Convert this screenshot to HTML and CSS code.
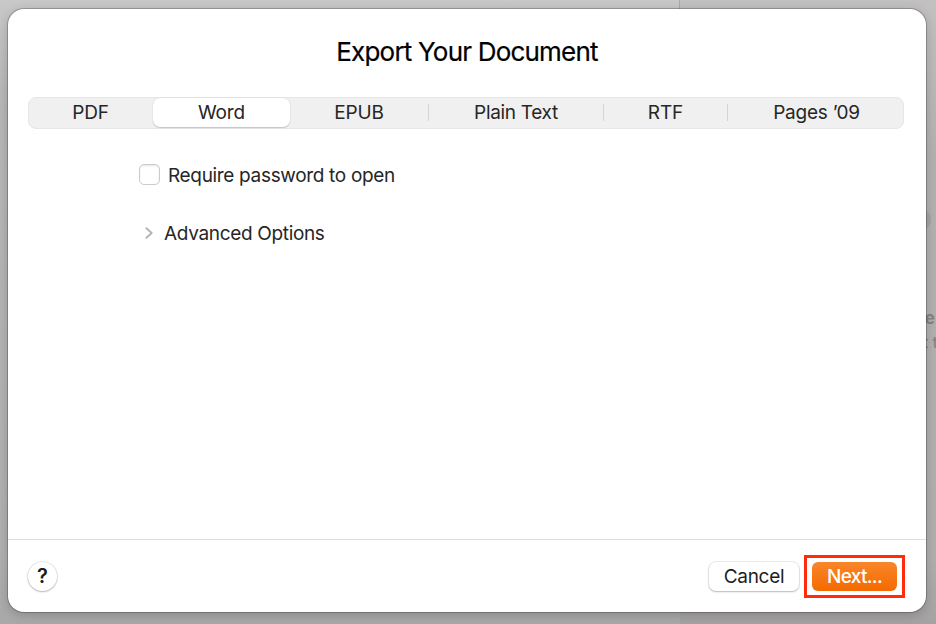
FILE: index.html
```html
<!DOCTYPE html>
<html lang="en">
<head>
    <meta charset="UTF-8">
    <meta name="viewport" content="width=device-width, initial-scale=1.0">
    <title>Export Your Document</title>
    <link rel="stylesheet" href="styles.css">
</head>
<body>
    <!-- Dimmed document window -->
    <div class="backdrop">
        <div class="canvas"></div>
        <div class="inspector">
            <span class="pill"></span>
            <span class="hint hint-bold">e</span>
            <span class="hint hint-small">t t</span>
        </div>
    </div>

    <!-- Export sheet -->
    <div class="sheet">
        <h1><span class="title-text">Export Your Document</span></h1>

        <div class="tabs">
            <div class="tab tab-pdf"><span>PDF</span></div>
            <div class="tab tab-word active"><span>Word</span></div>
            <div class="tab tab-epub"><span>EPUB</span></div>
            <div class="tab tab-text divided"><span>Plain Text</span></div>
            <div class="tab tab-rtf divided"><span>RTF</span></div>
            <div class="tab tab-pages divided"><span>Pages ’09</span></div>
        </div>

        <div class="options">
            <label class="option">
                <span class="checkbox"></span>
                <span class="option-text">Require password to open</span>
            </label>
            <div class="option advanced">
                <svg class="chevron" width="10" height="14" viewBox="0 0 10 14">
                    <path d="M2.4 2.2 L7.7 7 L2.4 11.8" fill="none" stroke="#b4b4b4" stroke-width="1.9" stroke-linecap="round" stroke-linejoin="round"/>
                </svg>
                <span class="option-text">Advanced Options</span>
            </div>
        </div>

        <div class="footer">
            <button class="help">?</button>
            <button class="cancel">Cancel</button>
            <div class="highlight">
                <button class="next">Next...</button>
            </div>
        </div>
    </div>
</body>
</html>
```

FILE: styles.css
```css
* {
    box-sizing: border-box;
}

body {
    margin: 0;
    width: 936px;
    height: 624px;
    padding: 9px 10px 12px 8px;
    overflow: hidden;
    position: relative;
    font-family: Inter, "Liberation Sans", sans-serif;
    font-size: 19px;
    color: #262626;
}

/* Window behind the sheet */
.backdrop {
    position: absolute;
    inset: 0;
    display: flex;
}

.canvas {
    width: 680px;
    background: linear-gradient(#c8c8c8, #b8b8b8 15%, #b0b0b0 90%, #a9a9a9);
    border-right: 1px solid #aaa9aa;
}

.inspector {
    flex: 1;
    position: relative;
    background: linear-gradient(#c2c0c1, #b3b1b2 25%, #b0aeaf 90%, #a4a2a3);
}

.pill {
    position: absolute;
    right: 5px;
    top: 209px;
    width: 40px;
    height: 21px;
    border-radius: 10px;
    background: #a5a3a4;
}

.hint {
    position: absolute;
    right: 1px;
    color: #858384;
    line-height: 20px;
    white-space: nowrap;
}

.hint-bold {
    top: 308px;
    font-size: 17px;
    font-weight: 700;
}

.hint-small {
    top: 332px;
    right: -2px;
    font-size: 16px;
    font-weight: 500;
}

/* Sheet */
.sheet {
    position: relative;
    height: 603px;
    display: flex;
    flex-direction: column;
    background: #fff;
    border-radius: 16px;
    box-shadow: 0 0 0 1px rgba(0, 0, 0, 0.22), 0 3px 12px rgba(0, 0, 0, 0.2);
}

h1 {
    margin: 0;
    padding-top: 27px;
    height: 88px;
    font-size: 26px;
    font-weight: 400;
    line-height: 32px;
    text-align: center;
    color: #000;
}

.title-text {
    letter-spacing: -0.8px;
    -webkit-text-stroke: 0.2px #000;
}

.tabs {
    display: flex;
    width: 876px;
    height: 32px;
    margin-left: 20px;
    background: #f0f0f0;
    border: 1px solid #e6e6e6;
    border-radius: 8px;
}

.tab {
    position: relative;
    display: flex;
    align-items: center;
    justify-content: center;
    height: 29px;
    letter-spacing: -0.15px;
}

.tab-pdf { width: 124px; padding-right: 1px; }
.tab-word { width: 137px; }
.tab-epub { width: 138px; }
.tab-text { width: 175px; padding-left: 1px; letter-spacing: -0.32px; }
.tab-rtf { width: 124px; padding-left: 1px; }
.tab-pages { width: 176px; padding-left: 3px; letter-spacing: -0.25px; }

.tab.active {
    background: #fff;
    background-clip: padding-box;
    border-radius: 7px;
    box-shadow: 0 0 1px rgba(0, 0, 0, 0.2), 0 1px 1px rgba(0, 0, 0, 0.16);
}

.tab.divided::before {
    content: "";
    position: absolute;
    left: 0;
    top: 6px;
    width: 1px;
    height: 17px;
    background: #d5d5d5;
}

/* Options */
.options {
    flex: 1;
    padding: 34px 0 0 131px;
}

.option {
    display: flex;
    align-items: center;
    height: 23px;
}

.option-text {
    padding-top: 2px;
    line-height: 24px;
    letter-spacing: -0.33px;
}

.checkbox {
    width: 21px;
    height: 21px;
    margin-right: 8px;
    border: 1px solid #cbcbcb;
    border-radius: 5px;
    box-shadow: inset 0 1px 2px rgba(0, 0, 0, 0.1);
}

.advanced {
    margin-top: 35px;
    padding-left: 5px;
}

.chevron {
    margin-right: 10px;
}

/* Footer */
.footer {
    display: flex;
    align-items: center;
    height: 73px;
    padding: 0 21px 0 20px;
    border-top: 1px solid #dedede;
}

button {
    padding: 0;
    border: none;
    background: #fff;
    font-family: inherit;
    font-size: 19px;
    color: #1c1c1c;
}

.help {
    width: 29px;
    height: 29px;
    margin-right: auto;
    border-radius: 50%;
    font-size: 20px;
    font-weight: 600;
    box-shadow: 0 0 0 1px rgba(0, 0, 0, 0.08), 0 1px 2px rgba(0, 0, 0, 0.22);
}

.cancel {
    width: 90px;
    height: 29px;
    margin-right: 5px;
    border-radius: 7px;
    letter-spacing: -0.3px;
    box-shadow: 0 0 0 1px rgba(0, 0, 0, 0.07), 0 1px 2px rgba(0, 0, 0, 0.22);
}

.highlight {
    width: 101px;
    height: 43px;
    display: flex;
    align-items: center;
    justify-content: center;
    border: 3px solid #ff2b0a;
}

.next {
    width: 85px;
    height: 29px;
    border-radius: 6px;
    background: linear-gradient(#f9862a, #f56a00);
    color: #fff;
    font-weight: 500;
    letter-spacing: -0.7px;
}
```
